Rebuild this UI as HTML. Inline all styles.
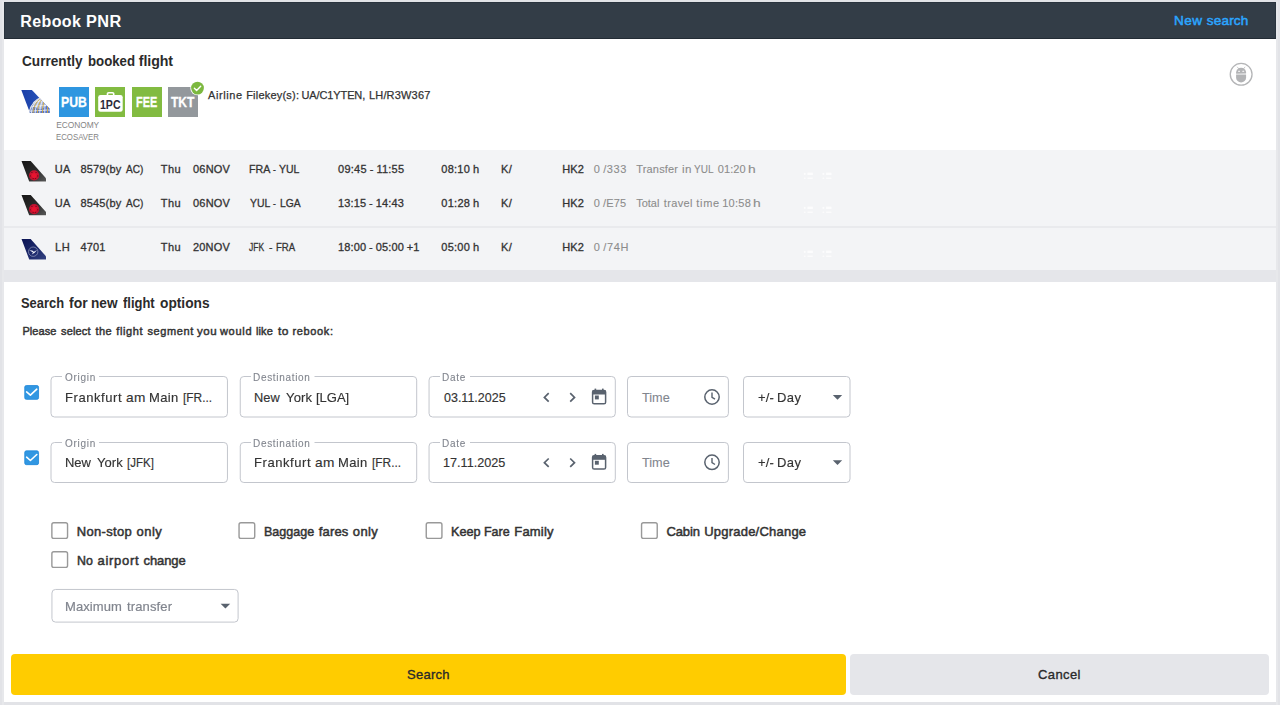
<!DOCTYPE html>
<html><head><meta charset="utf-8"><title>Rebook PNR</title>
<style>
*{box-sizing:border-box}
html,body{margin:0;padding:0}
body{width:1280px;height:705px;overflow:hidden;background:#e2e3e7;font-family:"Liberation Sans",sans-serif;position:relative}
.abs{position:absolute}
.t{position:absolute;white-space:pre;font-family:"Liberation Sans",sans-serif}
.panel{left:4px;top:2px;width:1272px;height:700px;background:#fff}
.strip{top:1px;width:2px;height:704px;background:#e7e8eb}
.hdr{left:4px;top:2px;width:1272px;height:37px;background:#333d47;border:1px solid #2a343e;border-bottom-color:#232c35}
.tbl{left:4px;top:150px;width:1272px;height:120px;background:#f3f4f6}
.sep{left:4px;top:226px;width:1272px;height:2px;background:#e9eaed}
.band{left:4px;top:270px;width:1272px;height:12px;background:#e5e6ea}
.badge{width:30px;height:30px;top:87px}
.btn{top:653.5px;height:41px;border-radius:4px}
</style></head><body>
<div class="abs strip" style="left:2px"></div><div class="abs strip" style="left:1276px"></div>
<div class="abs panel"></div>
<div class="abs hdr"></div>
<div class="abs tbl"></div>
<div class="abs sep"></div>
<div class="abs band"></div>

<!-- badges -->
<div class="abs badge" style="left:59px;background:#2e96e0"></div>
<div class="abs badge" style="left:95.3px;background:#82bb41"></div>
<div class="abs badge" style="left:132px;background:#82bb41"></div>
<div class="abs badge" style="left:168.3px;background:#93989c"></div>

<!-- fields row 1 & 2 -->


<!-- checkboxes -->

<!-- max transfer -->

<!-- buttons -->
<div class="abs btn" style="left:11px;width:835px;background:#ffcc00"></div>
<div class="abs btn" style="left:850px;width:419px;background:#e5e6ea"></div>

<!-- icons svg overlay -->
<svg class="abs" style="left:0;top:0" width="1280" height="705" viewBox="0 0 1280 705">
<defs>
<linearGradient id="gAC" x1="0" y1="0" x2="1" y2="1"><stop offset="0" stop-color="#161616"/><stop offset=".55" stop-color="#2c2c2c"/><stop offset="1" stop-color="#585858"/></linearGradient>
<linearGradient id="gLH" x1="0" y1="0" x2="1" y2="1"><stop offset="0" stop-color="#0b1454"/><stop offset=".6" stop-color="#1f2c6e"/><stop offset="1" stop-color="#33427f"/></linearGradient>
<linearGradient id="gUA" x1="0" y1="0" x2="1" y2="0"><stop offset="0" stop-color="#1a3fa8"/><stop offset="1" stop-color="#2f5cc0"/></linearGradient>
<clipPath id="cUA"><polygon points="21.3,89.9 31.9,89.9 49.8,109.1 49.8,113 30,113"/></clipPath>
<clipPath id="cGL"><circle cx="47.5" cy="115" r="19.1"/></clipPath>
</defs>
<rect x="51.0" y="376.5" width="176.45" height="40.50" rx="3.6" fill="#fff" stroke="#c3c6cd" stroke-width="1"/>
<rect x="62" y="375.0" width="37" height="3" fill="#fff"/>
<rect x="240.25" y="376.5" width="176.45" height="40.50" rx="3.6" fill="#fff" stroke="#c3c6cd" stroke-width="1"/>
<rect x="251" y="375.0" width="63.5" height="3" fill="#fff"/>
<rect x="429.06" y="376.5" width="186.24" height="40.50" rx="3.6" fill="#fff" stroke="#c3c6cd" stroke-width="1"/>
<rect x="440" y="375.0" width="30" height="3" fill="#fff"/>
<rect x="627.5" y="376.5" width="100.90" height="40.50" rx="3.6" fill="#fff" stroke="#c3c6cd" stroke-width="1"/>
<rect x="743.5" y="376.5" width="106.50" height="40.50" rx="3.6" fill="#fff" stroke="#c3c6cd" stroke-width="1"/>
<rect x="51.0" y="442.5" width="176.45" height="40.00" rx="3.6" fill="#fff" stroke="#c3c6cd" stroke-width="1"/>
<rect x="62" y="441.0" width="37" height="3" fill="#fff"/>
<rect x="240.25" y="442.5" width="176.45" height="40.00" rx="3.6" fill="#fff" stroke="#c3c6cd" stroke-width="1"/>
<rect x="251" y="441.0" width="63.5" height="3" fill="#fff"/>
<rect x="429.06" y="442.5" width="186.24" height="40.00" rx="3.6" fill="#fff" stroke="#c3c6cd" stroke-width="1"/>
<rect x="440" y="441.0" width="30" height="3" fill="#fff"/>
<rect x="627.5" y="442.5" width="100.90" height="40.00" rx="3.6" fill="#fff" stroke="#c3c6cd" stroke-width="1"/>
<rect x="743.5" y="442.5" width="106.50" height="40.00" rx="3.6" fill="#fff" stroke="#c3c6cd" stroke-width="1"/>
<rect x="51.95" y="589.45" width="186.15" height="32.65" rx="3.6" fill="#fff" stroke="#c3c6cd" stroke-width="1"/>
<polygon points="21.3,89.9 31.9,89.9 49.8,109.1 49.8,113 30,113" fill="url(#gUA)"/>
<g clip-path="url(#cUA)"><g clip-path="url(#cGL)"><circle cx="47.5" cy="115" r="18.8" fill="#5876c8"/><circle cx="40" cy="102" r="7" fill="#dfe3ec" fill-opacity=".55"/><g stroke="#f2f4f8" stroke-opacity=".85" stroke-width="1" fill="none"><ellipse cx="47.5" cy="115" rx="2.8" ry="18.8"/><ellipse cx="47.5" cy="115" rx="7.9" ry="18.8"/><ellipse cx="47.5" cy="115" rx="12.6" ry="18.8"/><ellipse cx="47.5" cy="115" rx="16.3" ry="18.8"/><path d="M27 111.4 Q47.5 108.6 68 111.4"/><path d="M27 107.6 Q47.5 103.2 68 107.6"/><path d="M27 103.6 Q47.5 97.6 68 103.6"/><path d="M29 99.6 Q47.5 92.6 66 99.6"/></g><g stroke="#e5ae1e" stroke-width=".75" fill="none"><ellipse cx="47.5" cy="115" rx="5.2" ry="18.8"/><ellipse cx="47.5" cy="115" rx="10.3" ry="18.8"/><ellipse cx="47.5" cy="115" rx="14.6" ry="18.8"/><path d="M47.5 96 V114"/></g><circle cx="47.5" cy="115" r="18.4" fill="none" stroke="#d9dce4" stroke-width="1.4"/></g></g>
<polygon points="21.50,161.10 30.70,161.10 46.00,178.30 46.00,181.50 29.20,181.50" fill="url(#gAC)" stroke="#fff" stroke-opacity=".7" stroke-width="1" paint-order="stroke"/>
<circle cx="34.1" cy="175.4" r="5.1" fill="#c51230"/>
<path d="M34.1 171.8 l1 2 l1.7 -.6 l-.5 2 l1.4 .4 l-2.3 1.9 l.3 1 l-1.5 -.3 l-.1 1.6 l-.1 -1.6 l-1.5 .3 l.3 -1 l-2.3 -1.9 l1.4 -.4 l-.5 -2 l1.7 .6 z" fill="#e8142f"/>
<ellipse cx="31.90" cy="172.50" rx=".75" ry=".55" fill="#5c0814" fill-opacity=".8"/>
<ellipse cx="36.10" cy="172.50" rx=".75" ry=".55" fill="#5c0814" fill-opacity=".8"/>
<ellipse cx="30.40" cy="175.90" rx=".75" ry=".55" fill="#5c0814" fill-opacity=".8"/>
<ellipse cx="37.70" cy="175.90" rx=".75" ry=".55" fill="#5c0814" fill-opacity=".8"/>
<ellipse cx="33.20" cy="178.50" rx=".75" ry=".55" fill="#5c0814" fill-opacity=".8"/>
<ellipse cx="35.40" cy="178.50" rx=".75" ry=".55" fill="#5c0814" fill-opacity=".8"/>
<polygon points="21.50,194.90 30.70,194.90 46.00,212.10 46.00,215.30 29.20,215.30" fill="url(#gAC)" stroke="#fff" stroke-opacity=".7" stroke-width="1" paint-order="stroke"/>
<circle cx="34.1" cy="209.2" r="5.1" fill="#c51230"/>
<path d="M34.1 205.6 l1 2 l1.7 -.6 l-.5 2 l1.4 .4 l-2.3 1.9 l.3 1 l-1.5 -.3 l-.1 1.6 l-.1 -1.6 l-1.5 .3 l.3 -1 l-2.3 -1.9 l1.4 -.4 l-.5 -2 l1.7 .6 z" fill="#e8142f"/>
<ellipse cx="31.90" cy="206.30" rx=".75" ry=".55" fill="#5c0814" fill-opacity=".8"/>
<ellipse cx="36.10" cy="206.30" rx=".75" ry=".55" fill="#5c0814" fill-opacity=".8"/>
<ellipse cx="30.40" cy="209.70" rx=".75" ry=".55" fill="#5c0814" fill-opacity=".8"/>
<ellipse cx="37.70" cy="209.70" rx=".75" ry=".55" fill="#5c0814" fill-opacity=".8"/>
<ellipse cx="33.20" cy="212.30" rx=".75" ry=".55" fill="#5c0814" fill-opacity=".8"/>
<ellipse cx="35.40" cy="212.30" rx=".75" ry=".55" fill="#5c0814" fill-opacity=".8"/>
<polygon points="21.50,239.10 30.70,239.10 46.00,256.30 46.00,259.50 29.20,259.50" fill="url(#gLH)" stroke="#fff" stroke-opacity=".7" stroke-width="1" paint-order="stroke"/>
<circle cx="33.2" cy="251.7" r="4.7" fill="none" stroke="#aab0cc" stroke-opacity=".75" stroke-width=".8"/>
<path d="M29.4 250.2 l2.9 .3 l1.6 1.3 l3.1 -1.9 l-2.3 2.8 l-3 1.7 l1.3 -2 z" fill="#eef0f8"/>
<rect x="98.2" y="95" width="24.5" height="16.7" rx="2.3" fill="#fff"/>
<path d="M107.5 95.6 v-1.7 a1.1 1.1 0 0 1 1.1 -1.1 h4 a1.1 1.1 0 0 1 1.1 1.1 v1.7" fill="none" stroke="#fff" stroke-width="1.6"/>
<circle cx="197.5" cy="88.1" r="7.2" fill="#fff"/><circle cx="197.5" cy="88.1" r="6.4" fill="#7cb83f"/>
<path d="M194.4 88.3 l2.2 2.2 l4.1 -4.3" fill="none" stroke="#fff" stroke-width="1.4" stroke-linecap="round" stroke-linejoin="round"/>
<circle cx="1241.15" cy="74.3" r="10.9" fill="#fff" stroke="#b4b5b7" stroke-width="1.3"/>
<g fill="#b2b3b5"><path d="M1236.1 73.8 v-1.4 a5 4.6 0 0 1 10 0 v1.2 z"/><path d="M1236.1 74.6 h10 v3.2 a5 4.6 0 0 1 -10 0 z"/></g><g stroke="#b2b3b5" stroke-width=".7" stroke-linecap="round"><path d="M1238.6 68.7 l-1.2 -1.6 M1243.7 68.7 l1.2 -1.6"/></g><g fill="#fff"><rect x="1238.1" y="70.7" width="1.9" height="1.1" rx=".4"/><rect x="1242.3" y="70.7" width="1.9" height="1.1" rx=".4"/></g>
<g fill="#fff" opacity=".8"><rect x="803.8" y="172.8" width="1.8" height="2"/><rect x="807.4" y="172.6" width="5.4" height="2.4"/><rect x="803.8" y="177.6" width="1.8" height="1.2"/><rect x="807.4" y="177.6" width="5.4" height="1.2"/></g>
<g fill="#fff" opacity=".8"><rect x="822.5" y="172.8" width="1.8" height="2"/><rect x="826.1" y="172.6" width="5.4" height="2.4"/><rect x="822.5" y="177.6" width="1.8" height="1.2"/><rect x="826.1" y="177.6" width="5.4" height="1.2"/></g>
<g fill="#fff" opacity=".8"><rect x="803.8" y="206.8" width="1.8" height="2"/><rect x="807.4" y="206.6" width="5.4" height="2.4"/><rect x="803.8" y="211.6" width="1.8" height="1.2"/><rect x="807.4" y="211.6" width="5.4" height="1.2"/></g>
<g fill="#fff" opacity=".8"><rect x="822.5" y="206.8" width="1.8" height="2"/><rect x="826.1" y="206.6" width="5.4" height="2.4"/><rect x="822.5" y="211.6" width="1.8" height="1.2"/><rect x="826.1" y="211.6" width="5.4" height="1.2"/></g>
<g fill="#fff" opacity=".8"><rect x="803.8" y="250.8" width="1.8" height="2"/><rect x="807.4" y="250.6" width="5.4" height="2.4"/><rect x="803.8" y="255.6" width="1.8" height="1.2"/><rect x="807.4" y="255.6" width="5.4" height="1.2"/></g>
<g fill="#fff" opacity=".8"><rect x="822.5" y="250.8" width="1.8" height="2"/><rect x="826.1" y="250.6" width="5.4" height="2.4"/><rect x="822.5" y="255.6" width="1.8" height="1.2"/><rect x="826.1" y="255.6" width="5.4" height="1.2"/></g>
<rect x="51.87" y="522.80" width="15.68" height="15.55" rx="1.9" fill="#fff" stroke="#999" stroke-width="1.4"/>
<rect x="51.87" y="551.80" width="15.68" height="15.55" rx="1.9" fill="#fff" stroke="#999" stroke-width="1.4"/>
<rect x="239.05" y="522.80" width="15.68" height="15.55" rx="1.9" fill="#fff" stroke="#999" stroke-width="1.4"/>
<rect x="426.25" y="522.80" width="15.68" height="15.55" rx="1.9" fill="#fff" stroke="#999" stroke-width="1.4"/>
<rect x="641.55" y="522.80" width="15.68" height="15.55" rx="1.9" fill="#fff" stroke="#999" stroke-width="1.4"/>
<rect x="24.75" y="385.55" width="13.8" height="13.8" rx="1.6" fill="#3197e2" stroke="#1d86d9" stroke-width=".8"/>
<path d="M26.6 391.9 L30.4 395.2 L36.8 389.2" fill="none" stroke="#fff" stroke-width="1.6" stroke-linecap="round" stroke-linejoin="round"/>
<path d="M548.7 393.2 l-4.3 4.2 l4.3 4.2" fill="none" stroke="#59626e" stroke-width="1.7"/>
<path d="M570.2 393.2 l4.3 4.2 l-4.3 4.2" fill="none" stroke="#59626e" stroke-width="1.7"/>
<g><rect x="592.6" y="390.5" width="13" height="13.3" rx="1.6" fill="none" stroke="#59626e" stroke-width="1.5"/><rect x="592.6" y="390.5" width="13" height="4" fill="#59626e"/><rect x="594.6" y="388.6" width="1.6" height="3" fill="#59626e"/><rect x="602" y="388.6" width="1.6" height="3" fill="#59626e"/><rect x="594.9" y="395.5" width="3.9" height="3.9" fill="#59626e"/></g>
<circle cx="712" cy="397" r="7.2" fill="none" stroke="#59626e" stroke-width="1.5"/>
<path d="M712 392.6 v4.7 l3 1.9" fill="none" stroke="#59626e" stroke-width="1.4"/>
<path d="M832.8 395 h9.4 l-4.7 4.7 z" fill="#59626e"/>
<rect x="24.75" y="450.85" width="13.8" height="13.8" rx="1.6" fill="#3197e2" stroke="#1d86d9" stroke-width=".8"/>
<path d="M26.6 457.2 L30.4 460.5 L36.8 454.5" fill="none" stroke="#fff" stroke-width="1.6" stroke-linecap="round" stroke-linejoin="round"/>
<path d="M548.7 458.5 l-4.3 4.2 l4.3 4.2" fill="none" stroke="#59626e" stroke-width="1.7"/>
<path d="M570.2 458.5 l4.3 4.2 l-4.3 4.2" fill="none" stroke="#59626e" stroke-width="1.7"/>
<g><rect x="592.6" y="455.8" width="13" height="13.3" rx="1.6" fill="none" stroke="#59626e" stroke-width="1.5"/><rect x="592.6" y="455.8" width="13" height="4" fill="#59626e"/><rect x="594.6" y="453.90000000000003" width="1.6" height="3" fill="#59626e"/><rect x="602" y="453.90000000000003" width="1.6" height="3" fill="#59626e"/><rect x="594.9" y="460.8" width="3.9" height="3.9" fill="#59626e"/></g>
<circle cx="712" cy="462.3" r="7.2" fill="none" stroke="#59626e" stroke-width="1.5"/>
<path d="M712 457.90000000000003 v4.7 l3 1.9" fill="none" stroke="#59626e" stroke-width="1.4"/>
<path d="M832.8 460.3 h9.4 l-4.7 4.7 z" fill="#59626e"/>
<path d="M220.6 603.8 h9.6 l-4.8 4.8 z" fill="#59626e"/>
</svg>

<span class="t" style="left:20.19px;top:10.36px;font-size:16px;line-height:24px;letter-spacing:0.411px;color:#fff;font-weight:700;">Rebook</span>
<span class="t" style="left:85.77px;top:10.36px;font-size:16px;line-height:24px;letter-spacing:0.500px;color:#fff;transform:scaleX(1.0156);transform-origin:0 0;font-weight:700;">PNR</span>
<span class="t" style="left:1174.01px;top:11.39px;font-size:13.6px;line-height:20px;letter-spacing:0.390px;color:#2ba5ff;-webkit-text-stroke:0.5px #2ba5ff;">New</span>
<span class="t" style="left:1206.74px;top:11.39px;font-size:13.6px;line-height:20px;letter-spacing:0.165px;color:#2ba5ff;-webkit-text-stroke:0.5px #2ba5ff;">search</span>
<span class="t" style="left:21.79px;top:51.28px;font-size:14.2px;line-height:21px;color:#2b2b2b;transform:scaleX(0.9603);transform-origin:0 0;font-weight:700;">Currently</span>
<span class="t" style="left:87.58px;top:51.28px;font-size:14.2px;line-height:21px;color:#2b2b2b;transform:scaleX(0.9322);transform-origin:0 0;font-weight:700;">booked</span>
<span class="t" style="left:138.84px;top:51.28px;font-size:14.2px;line-height:21px;letter-spacing:-0.089px;color:#2b2b2b;font-weight:700;">flight</span>
<span class="t" style="left:207.97px;top:87.19px;font-size:11px;line-height:16px;letter-spacing:0.578px;color:#333;-webkit-text-stroke:0.25px #333;">Airline</span>
<span class="t" style="left:246.17px;top:87.19px;font-size:11px;line-height:16px;letter-spacing:0.207px;color:#333;-webkit-text-stroke:0.25px #333;">Filekey(s):</span>
<span class="t" style="left:301.53px;top:87.19px;font-size:11px;line-height:16px;letter-spacing:-0.119px;color:#333;-webkit-text-stroke:0.25px #333;">UA/C1YTEN,</span>
<span class="t" style="left:368.97px;top:87.19px;font-size:11px;line-height:16px;letter-spacing:0.177px;color:#333;-webkit-text-stroke:0.25px #333;">LH/R3W367</span>
<span class="t" style="left:56.15px;top:119.19px;font-size:8.4px;line-height:13px;letter-spacing:-0.045px;color:#858585;">ECONOMY</span>
<span class="t" style="left:56.20px;top:131.19px;font-size:8.4px;line-height:13px;color:#858585;transform:scaleX(0.9334);transform-origin:0 0;">ECOSAVER</span>
<span class="t" style="left:60.98px;top:91.85px;font-size:14px;line-height:21px;color:#fff;transform:scaleX(0.8722);transform-origin:0 0;font-weight:700;-webkit-text-stroke:0.3px #fff;">PUB</span>
<span class="t" style="left:100.09px;top:96.04px;font-size:12px;line-height:18px;color:#2b2b3b;transform:scaleX(0.8792);transform-origin:0 0;font-weight:700;">1PC</span>
<span class="t" style="left:136.04px;top:91.95px;font-size:14px;line-height:21px;color:#fff;transform:scaleX(0.7788);transform-origin:0 0;font-weight:700;-webkit-text-stroke:0.3px #fff;">FEE</span>
<span class="t" style="left:171.22px;top:91.95px;font-size:14px;line-height:21px;color:#fff;transform:scaleX(0.8601);transform-origin:0 0;font-weight:700;-webkit-text-stroke:0.3px #fff;">TKT</span>
<span class="t" style="left:54.85px;top:161.19px;font-size:11px;line-height:16px;letter-spacing:0.224px;color:#333;-webkit-text-stroke:0.3px #333;">UA</span>
<span class="t" style="left:80.51px;top:161.19px;font-size:11px;line-height:16px;letter-spacing:0.157px;color:#333;-webkit-text-stroke:0.3px #333;">8579(by</span>
<span class="t" style="left:125.69px;top:161.19px;font-size:11px;line-height:16px;color:#333;transform:scaleX(0.9111);transform-origin:0 0;-webkit-text-stroke:0.3px #333;">AC)</span>
<span class="t" style="left:160.82px;top:161.19px;font-size:11px;line-height:16px;letter-spacing:0.377px;color:#333;-webkit-text-stroke:0.3px #333;">Thu</span>
<span class="t" style="left:193.02px;top:161.19px;font-size:11px;line-height:16px;letter-spacing:0.189px;color:#333;-webkit-text-stroke:0.3px #333;">06NOV</span>
<span class="t" style="left:248.82px;top:161.19px;font-size:11px;line-height:16px;color:#333;transform:scaleX(0.9711);transform-origin:0 0;-webkit-text-stroke:0.3px #333;">FRA</span>
<span class="t" style="left:272.81px;top:161.19px;font-size:11px;line-height:16px;color:#333;transform:scaleX(0.7718);transform-origin:0 0;-webkit-text-stroke:0.3px #333;">-</span>
<span class="t" style="left:279.12px;top:161.19px;font-size:11px;line-height:16px;color:#333;transform:scaleX(0.9510);transform-origin:0 0;-webkit-text-stroke:0.3px #333;">YUL</span>
<span class="t" style="left:338.12px;top:161.19px;font-size:11px;line-height:16px;letter-spacing:0.231px;color:#333;word-spacing:-0.429px;-webkit-text-stroke:0.3px #333;">09:45 - 11:55</span>
<span class="t" style="left:441.32px;top:161.19px;font-size:11px;line-height:16px;letter-spacing:0.255px;color:#333;-webkit-text-stroke:0.3px #333;">08:10</span>
<span class="t" style="left:472.63px;top:161.19px;font-size:11px;line-height:16px;color:#333;transform:scaleX(1.0072);transform-origin:0 0;-webkit-text-stroke:0.3px #333;">h</span>
<span class="t" style="left:501.08px;top:161.19px;font-size:11px;line-height:16px;letter-spacing:0.421px;color:#333;-webkit-text-stroke:0.3px #333;">K/</span>
<span class="t" style="left:562.30px;top:161.19px;font-size:11px;line-height:16px;letter-spacing:0.132px;color:#333;-webkit-text-stroke:0.3px #333;">HK2</span>
<span class="t" style="left:593.76px;top:161.19px;font-size:11px;line-height:16px;letter-spacing:0.537px;color:#8c8c8c;word-spacing:-0.735px;-webkit-text-stroke:0.1px #8c8c8c;">0 /333</span>
<span class="t" style="left:636.24px;top:161.19px;font-size:11px;line-height:16px;letter-spacing:0.177px;color:#8c8c8c;-webkit-text-stroke:0.1px #8c8c8c;">Transfer</span>
<span class="t" style="left:681.54px;top:161.19px;font-size:11px;line-height:16px;letter-spacing:0.500px;color:#8c8c8c;transform:scaleX(1.0535);transform-origin:0 0;-webkit-text-stroke:0.1px #8c8c8c;">in</span>
<span class="t" style="left:694.11px;top:161.19px;font-size:11px;line-height:16px;color:#8c8c8c;transform:scaleX(0.9095);transform-origin:0 0;-webkit-text-stroke:0.1px #8c8c8c;">YUL</span>
<span class="t" style="left:717.86px;top:161.19px;font-size:11px;line-height:16px;letter-spacing:0.028px;color:#8c8c8c;-webkit-text-stroke:0.1px #8c8c8c;">01:20</span>
<span class="t" style="left:748.15px;top:161.19px;font-size:11px;line-height:16px;color:#8c8c8c;transform:scaleX(1.2566);transform-origin:0 0;-webkit-text-stroke:0.1px #8c8c8c;">h</span>
<span class="t" style="left:54.85px;top:195.19px;font-size:11px;line-height:16px;letter-spacing:0.224px;color:#333;-webkit-text-stroke:0.3px #333;">UA</span>
<span class="t" style="left:80.51px;top:195.19px;font-size:11px;line-height:16px;letter-spacing:0.157px;color:#333;-webkit-text-stroke:0.3px #333;">8545(by</span>
<span class="t" style="left:125.69px;top:195.19px;font-size:11px;line-height:16px;color:#333;transform:scaleX(0.9111);transform-origin:0 0;-webkit-text-stroke:0.3px #333;">AC)</span>
<span class="t" style="left:160.82px;top:195.19px;font-size:11px;line-height:16px;letter-spacing:0.377px;color:#333;-webkit-text-stroke:0.3px #333;">Thu</span>
<span class="t" style="left:193.02px;top:195.19px;font-size:11px;line-height:16px;letter-spacing:0.189px;color:#333;-webkit-text-stroke:0.3px #333;">06NOV</span>
<span class="t" style="left:249.52px;top:195.19px;font-size:11px;line-height:16px;color:#333;transform:scaleX(0.9463);transform-origin:0 0;-webkit-text-stroke:0.3px #333;">YUL</span>
<span class="t" style="left:273.01px;top:195.19px;font-size:11px;line-height:16px;color:#333;transform:scaleX(0.7718);transform-origin:0 0;-webkit-text-stroke:0.3px #333;">-</span>
<span class="t" style="left:279.95px;top:195.19px;font-size:11px;line-height:16px;color:#333;transform:scaleX(0.9363);transform-origin:0 0;-webkit-text-stroke:0.3px #333;">LGA</span>
<span class="t" style="left:337.93px;top:195.19px;font-size:11px;line-height:16px;letter-spacing:0.156px;color:#333;word-spacing:-0.354px;-webkit-text-stroke:0.3px #333;">13:15 - 14:43</span>
<span class="t" style="left:441.32px;top:195.19px;font-size:11px;line-height:16px;letter-spacing:0.263px;color:#333;-webkit-text-stroke:0.3px #333;">01:28</span>
<span class="t" style="left:472.63px;top:195.19px;font-size:11px;line-height:16px;color:#333;transform:scaleX(1.0072);transform-origin:0 0;-webkit-text-stroke:0.3px #333;">h</span>
<span class="t" style="left:501.08px;top:195.19px;font-size:11px;line-height:16px;letter-spacing:0.421px;color:#333;-webkit-text-stroke:0.3px #333;">K/</span>
<span class="t" style="left:562.30px;top:195.19px;font-size:11px;line-height:16px;letter-spacing:0.132px;color:#333;-webkit-text-stroke:0.3px #333;">HK2</span>
<span class="t" style="left:593.76px;top:195.19px;font-size:11px;line-height:16px;letter-spacing:0.172px;color:#8c8c8c;word-spacing:-0.370px;-webkit-text-stroke:0.1px #8c8c8c;">0 /E75</span>
<span class="t" style="left:636.24px;top:195.19px;font-size:11px;line-height:16px;letter-spacing:-0.012px;color:#8c8c8c;-webkit-text-stroke:0.1px #8c8c8c;">Total</span>
<span class="t" style="left:663.74px;top:195.19px;font-size:11px;line-height:16px;letter-spacing:0.356px;color:#8c8c8c;-webkit-text-stroke:0.1px #8c8c8c;">travel</span>
<span class="t" style="left:696.34px;top:195.19px;font-size:11px;line-height:16px;letter-spacing:0.653px;color:#8c8c8c;-webkit-text-stroke:0.1px #8c8c8c;">time</span>
<span class="t" style="left:722.22px;top:195.19px;font-size:11px;line-height:16px;letter-spacing:0.251px;color:#8c8c8c;-webkit-text-stroke:0.1px #8c8c8c;">10:58</span>
<span class="t" style="left:753.35px;top:195.19px;font-size:11px;line-height:16px;color:#8c8c8c;transform:scaleX(1.2566);transform-origin:0 0;-webkit-text-stroke:0.1px #8c8c8c;">h</span>
<span class="t" style="left:54.89px;top:239.19px;font-size:11px;line-height:16px;letter-spacing:0.500px;color:#333;transform:scaleX(1.0110);transform-origin:0 0;-webkit-text-stroke:0.3px #333;">LH</span>
<span class="t" style="left:80.59px;top:239.19px;font-size:11px;line-height:16px;letter-spacing:0.075px;color:#333;-webkit-text-stroke:0.3px #333;">4701</span>
<span class="t" style="left:160.82px;top:239.19px;font-size:11px;line-height:16px;letter-spacing:0.377px;color:#333;-webkit-text-stroke:0.3px #333;">Thu</span>
<span class="t" style="left:193.01px;top:239.19px;font-size:11px;line-height:16px;letter-spacing:0.191px;color:#333;-webkit-text-stroke:0.3px #333;">20NOV</span>
<span class="t" style="left:248.80px;top:239.19px;font-size:11px;line-height:16px;color:#333;transform:scaleX(0.7701);transform-origin:0 0;-webkit-text-stroke:0.3px #333;">JFK</span>
<span class="t" style="left:268.77px;top:239.19px;font-size:11px;line-height:16px;color:#333;transform:scaleX(0.9337);transform-origin:0 0;-webkit-text-stroke:0.3px #333;">-</span>
<span class="t" style="left:275.64px;top:239.19px;font-size:11px;line-height:16px;color:#333;transform:scaleX(0.8712);transform-origin:0 0;-webkit-text-stroke:0.3px #333;">FRA</span>
<span class="t" style="left:337.93px;top:239.19px;font-size:11px;line-height:16px;letter-spacing:0.144px;color:#333;word-spacing:-0.342px;-webkit-text-stroke:0.3px #333;">18:00 - 05:00 +1</span>
<span class="t" style="left:441.32px;top:239.19px;font-size:11px;line-height:16px;letter-spacing:0.252px;color:#333;-webkit-text-stroke:0.3px #333;">05:00</span>
<span class="t" style="left:472.63px;top:239.19px;font-size:11px;line-height:16px;color:#333;transform:scaleX(1.0072);transform-origin:0 0;-webkit-text-stroke:0.3px #333;">h</span>
<span class="t" style="left:501.08px;top:239.19px;font-size:11px;line-height:16px;letter-spacing:0.421px;color:#333;-webkit-text-stroke:0.3px #333;">K/</span>
<span class="t" style="left:562.30px;top:239.19px;font-size:11px;line-height:16px;letter-spacing:0.132px;color:#333;-webkit-text-stroke:0.3px #333;">HK2</span>
<span class="t" style="left:593.76px;top:239.19px;font-size:11px;line-height:16px;letter-spacing:0.602px;color:#8c8c8c;word-spacing:-0.800px;-webkit-text-stroke:0.1px #8c8c8c;">0 /74H</span>
<span class="t" style="left:21.30px;top:293.28px;font-size:14.2px;line-height:21px;color:#2b2b2b;transform:scaleX(0.9103);transform-origin:0 0;font-weight:700;">Search</span>
<span class="t" style="left:69.13px;top:293.28px;font-size:14.2px;line-height:21px;color:#2b2b2b;transform:scaleX(0.9838);transform-origin:0 0;font-weight:700;">for</span>
<span class="t" style="left:91.41px;top:293.28px;font-size:14.2px;line-height:21px;color:#2b2b2b;transform:scaleX(0.9601);transform-origin:0 0;font-weight:700;">new</span>
<span class="t" style="left:123.03px;top:293.28px;font-size:14.2px;line-height:21px;color:#2b2b2b;transform:scaleX(0.9132);transform-origin:0 0;font-weight:700;">flight</span>
<span class="t" style="left:159.91px;top:293.28px;font-size:14.2px;line-height:21px;color:#2b2b2b;transform:scaleX(0.9680);transform-origin:0 0;font-weight:700;">options</span>
<span class="t" style="left:22.46px;top:322.99px;font-size:11px;line-height:16px;letter-spacing:0.067px;color:#333;-webkit-text-stroke:0.45px #333;">Please</span>
<span class="t" style="left:61.04px;top:322.99px;font-size:11px;line-height:16px;letter-spacing:0.158px;color:#333;-webkit-text-stroke:0.45px #333;">select</span>
<span class="t" style="left:95.56px;top:322.99px;font-size:11px;line-height:16px;letter-spacing:0.443px;color:#333;-webkit-text-stroke:0.45px #333;">the</span>
<span class="t" style="left:116.37px;top:322.99px;font-size:11px;line-height:16px;letter-spacing:0.604px;color:#333;-webkit-text-stroke:0.45px #333;">flight</span>
<span class="t" style="left:147.44px;top:322.99px;font-size:11px;line-height:16px;letter-spacing:0.608px;color:#333;-webkit-text-stroke:0.45px #333;">segment</span>
<span class="t" style="left:196.86px;top:322.99px;font-size:11px;line-height:16px;letter-spacing:0.500px;color:#333;transform:scaleX(1.0465);transform-origin:0 0;-webkit-text-stroke:0.45px #333;">you</span>
<span class="t" style="left:219.90px;top:322.99px;font-size:11px;line-height:16px;letter-spacing:0.750px;color:#333;-webkit-text-stroke:0.45px #333;">would</span>
<span class="t" style="left:256.00px;top:322.99px;font-size:11px;line-height:16px;letter-spacing:0.099px;color:#333;-webkit-text-stroke:0.45px #333;">like</span>
<span class="t" style="left:277.77px;top:322.99px;font-size:11px;line-height:16px;letter-spacing:0.500px;color:#333;transform:scaleX(1.0875);transform-origin:0 0;-webkit-text-stroke:0.45px #333;">to</span>
<span class="t" style="left:292.40px;top:322.99px;font-size:11px;line-height:16px;letter-spacing:0.644px;color:#333;-webkit-text-stroke:0.45px #333;">rebook:</span>
<span class="t" style="left:65.11px;top:370.44px;font-size:10px;line-height:15px;letter-spacing:0.703px;color:#81858e;-webkit-text-stroke:0.1px #81858e;will-change:transform;">Origin</span>
<span class="t" style="left:253.46px;top:370.44px;font-size:10px;line-height:15px;letter-spacing:0.683px;color:#81858e;-webkit-text-stroke:0.1px #81858e;will-change:transform;">Destination</span>
<span class="t" style="left:442.36px;top:370.44px;font-size:10px;line-height:15px;letter-spacing:0.729px;color:#81858e;-webkit-text-stroke:0.1px #81858e;will-change:transform;">Date</span>
<span class="t" style="left:65.11px;top:387.50px;font-size:13px;line-height:20px;letter-spacing:0.578px;color:#333;-webkit-text-stroke:0.15px #333;will-change:transform;">Frankfurt</span>
<span class="t" style="left:126.40px;top:387.50px;font-size:13px;line-height:20px;letter-spacing:0.500px;color:#333;transform:scaleX(1.0511);transform-origin:0 0;-webkit-text-stroke:0.15px #333;">am</span>
<span class="t" style="left:149.41px;top:387.50px;font-size:13px;line-height:20px;letter-spacing:0.326px;color:#333;-webkit-text-stroke:0.15px #333;will-change:transform;">Main</span>
<span class="t" style="left:182.78px;top:387.50px;font-size:13px;line-height:20px;color:#333;transform:scaleX(0.9151);transform-origin:0 0;-webkit-text-stroke:0.15px #333;">[FR...</span>
<span class="t" style="left:254.13px;top:387.50px;font-size:13px;line-height:20px;color:#333;transform:scaleX(0.9869);transform-origin:0 0;-webkit-text-stroke:0.15px #333;">New</span>
<span class="t" style="left:285.81px;top:387.50px;font-size:13px;line-height:20px;letter-spacing:0.174px;color:#333;-webkit-text-stroke:0.15px #333;will-change:transform;">York</span>
<span class="t" style="left:316.22px;top:387.50px;font-size:13px;line-height:20px;letter-spacing:-0.025px;color:#333;-webkit-text-stroke:0.15px #333;will-change:transform;">[LGA]</span>
<span class="t" style="left:443.81px;top:387.50px;font-size:13px;line-height:20px;color:#333;transform:scaleX(0.9607);transform-origin:0 0;-webkit-text-stroke:0.15px #333;">03.11.2025</span>
<span class="t" style="left:641.53px;top:387.50px;font-size:13px;line-height:20px;color:#81858e;transform:scaleX(0.9765);transform-origin:0 0;-webkit-text-stroke:0.1px #81858e;">Time</span>
<span class="t" style="left:758.21px;top:387.50px;font-size:13px;line-height:20px;letter-spacing:0.176px;color:#333;-webkit-text-stroke:0.15px #333;will-change:transform;">+/-</span>
<span class="t" style="left:777.21px;top:387.50px;font-size:13px;line-height:20px;letter-spacing:0.484px;color:#333;-webkit-text-stroke:0.15px #333;will-change:transform;">Day</span>
<span class="t" style="left:65.11px;top:435.74px;font-size:10px;line-height:15px;letter-spacing:0.703px;color:#81858e;-webkit-text-stroke:0.1px #81858e;will-change:transform;">Origin</span>
<span class="t" style="left:253.46px;top:435.74px;font-size:10px;line-height:15px;letter-spacing:0.683px;color:#81858e;-webkit-text-stroke:0.1px #81858e;will-change:transform;">Destination</span>
<span class="t" style="left:442.36px;top:435.74px;font-size:10px;line-height:15px;letter-spacing:0.729px;color:#81858e;-webkit-text-stroke:0.1px #81858e;will-change:transform;">Date</span>
<span class="t" style="left:65.11px;top:452.80px;font-size:13px;line-height:20px;letter-spacing:-0.016px;color:#333;-webkit-text-stroke:0.15px #333;will-change:transform;">New</span>
<span class="t" style="left:96.91px;top:452.80px;font-size:13px;line-height:20px;letter-spacing:0.041px;color:#333;-webkit-text-stroke:0.15px #333;will-change:transform;">York</span>
<span class="t" style="left:127.00px;top:452.80px;font-size:13px;line-height:20px;color:#333;transform:scaleX(0.8863);transform-origin:0 0;-webkit-text-stroke:0.15px #333;">[JFK]</span>
<span class="t" style="left:254.16px;top:452.80px;font-size:13px;line-height:20px;letter-spacing:0.578px;color:#333;-webkit-text-stroke:0.15px #333;will-change:transform;">Frankfurt</span>
<span class="t" style="left:315.45px;top:452.80px;font-size:13px;line-height:20px;letter-spacing:0.500px;color:#333;transform:scaleX(1.0511);transform-origin:0 0;-webkit-text-stroke:0.15px #333;">am</span>
<span class="t" style="left:338.46px;top:452.80px;font-size:13px;line-height:20px;letter-spacing:0.326px;color:#333;-webkit-text-stroke:0.15px #333;will-change:transform;">Main</span>
<span class="t" style="left:371.83px;top:452.80px;font-size:13px;line-height:20px;color:#333;transform:scaleX(0.9151);transform-origin:0 0;-webkit-text-stroke:0.15px #333;">[FR...</span>
<span class="t" style="left:442.98px;top:452.80px;font-size:13px;line-height:20px;color:#333;transform:scaleX(0.9737);transform-origin:0 0;-webkit-text-stroke:0.15px #333;">17.11.2025</span>
<span class="t" style="left:641.53px;top:452.80px;font-size:13px;line-height:20px;color:#81858e;transform:scaleX(0.9765);transform-origin:0 0;-webkit-text-stroke:0.1px #81858e;">Time</span>
<span class="t" style="left:758.21px;top:452.80px;font-size:13px;line-height:20px;letter-spacing:0.176px;color:#333;-webkit-text-stroke:0.15px #333;will-change:transform;">+/-</span>
<span class="t" style="left:777.21px;top:452.80px;font-size:13px;line-height:20px;letter-spacing:0.484px;color:#333;-webkit-text-stroke:0.15px #333;will-change:transform;">Day</span>
<span class="t" style="left:76.76px;top:521.50px;font-size:13px;line-height:20px;letter-spacing:0.319px;color:#333;-webkit-text-stroke:0.5px #333;">Non-stop</span>
<span class="t" style="left:136.52px;top:521.50px;font-size:13px;line-height:20px;letter-spacing:0.465px;color:#333;-webkit-text-stroke:0.5px #333;">only</span>
<span class="t" style="left:76.80px;top:550.60px;font-size:13px;line-height:20px;color:#333;transform:scaleX(0.9527);transform-origin:0 0;-webkit-text-stroke:0.5px #333;">No</span>
<span class="t" style="left:97.52px;top:550.60px;font-size:13px;line-height:20px;letter-spacing:0.713px;color:#333;-webkit-text-stroke:0.5px #333;">airport</span>
<span class="t" style="left:143.52px;top:550.60px;font-size:13px;line-height:20px;letter-spacing:-0.085px;color:#333;-webkit-text-stroke:0.5px #333;">change</span>
<span class="t" style="left:263.58px;top:521.50px;font-size:13px;line-height:20px;color:#333;transform:scaleX(0.9649);transform-origin:0 0;-webkit-text-stroke:0.5px #333;">Baggage</span>
<span class="t" style="left:318.87px;top:521.50px;font-size:13px;line-height:20px;letter-spacing:0.141px;color:#333;-webkit-text-stroke:0.5px #333;">fares</span>
<span class="t" style="left:352.82px;top:521.50px;font-size:13px;line-height:20px;letter-spacing:0.398px;color:#333;-webkit-text-stroke:0.5px #333;">only</span>
<span class="t" style="left:451.08px;top:521.50px;font-size:13px;line-height:20px;color:#333;transform:scaleX(0.9735);transform-origin:0 0;-webkit-text-stroke:0.5px #333;">Keep</span>
<span class="t" style="left:484.49px;top:521.50px;font-size:13px;line-height:20px;color:#333;transform:scaleX(0.9594);transform-origin:0 0;-webkit-text-stroke:0.5px #333;">Fare</span>
<span class="t" style="left:514.26px;top:521.50px;font-size:13px;line-height:20px;letter-spacing:0.188px;color:#333;-webkit-text-stroke:0.5px #333;">Family</span>
<span class="t" style="left:666.51px;top:521.50px;font-size:13px;line-height:20px;letter-spacing:-0.129px;color:#333;-webkit-text-stroke:0.5px #333;">Cabin</span>
<span class="t" style="left:704.18px;top:521.50px;font-size:13px;line-height:20px;letter-spacing:0.221px;color:#333;-webkit-text-stroke:0.5px #333;">Upgrade/Change</span>
<span class="t" style="left:65.23px;top:596.50px;font-size:13px;line-height:20px;letter-spacing:0.091px;color:#81858e;-webkit-text-stroke:0.2px #81858e;will-change:transform;">Maximum</span>
<span class="t" style="left:127.34px;top:596.50px;font-size:13px;line-height:20px;letter-spacing:0.141px;color:#81858e;-webkit-text-stroke:0.2px #81858e;will-change:transform;">transfer</span>
<span class="t" style="left:406.96px;top:664.70px;font-size:13px;line-height:20px;letter-spacing:0.282px;color:#2a2a2a;-webkit-text-stroke:0.35px #2a2a2a;">Search</span>
<span class="t" style="left:1038.00px;top:664.70px;font-size:13px;line-height:20px;letter-spacing:0.391px;color:#2a2a2a;-webkit-text-stroke:0.35px #2a2a2a;">Cancel</span>
</body></html>
